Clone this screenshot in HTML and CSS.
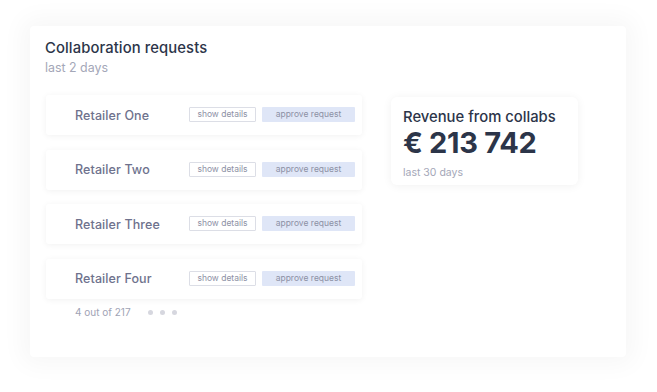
FILE: index.html
```html
<!DOCTYPE html>
<html>
<head>
<meta charset="utf-8">
<link rel="stylesheet" href="styles.css">
</head>
<body>
<div class="card">
  <h1 class="title">Collaboration requests</h1>
  <div class="subtitle">last 2 days</div>
  <div class="content">
    <div class="list">
      <div class="row">
        <span class="name">Retailer One</span>
        <span class="actions"><span class="btn-outline">show details</span><span class="btn-fill">approve request</span></span>
      </div>
      <div class="row">
        <span class="name">Retailer Two</span>
        <span class="actions"><span class="btn-outline">show details</span><span class="btn-fill">approve request</span></span>
      </div>
      <div class="row">
        <span class="name">Retailer Three</span>
        <span class="actions"><span class="btn-outline">show details</span><span class="btn-fill">approve request</span></span>
      </div>
      <div class="row">
        <span class="name">Retailer Four</span>
        <span class="actions"><span class="btn-outline">show details</span><span class="btn-fill">approve request</span></span>
      </div>
      <div class="footer">
        <span class="count">4 out of 217</span>
        <span class="dots"><i></i><i></i><i></i></span>
      </div>
    </div>
    <div class="revenue">
      <div class="rev-title">Revenue from collabs</div>
      <div class="rev-value">€ 213 742</div>
      <div class="rev-sub">last 30 days</div>
    </div>
  </div>
</div>
</body>
</html>
```
FILE: styles.css
```css
html, body {
  margin: 0;
  padding: 0;
  background: #ffffff;
}
body {
  width: 657px;
  height: 392px;
  overflow: hidden;
  font-family: "Inter", "Noto Sans", sans-serif;
  padding: 26px 31px 0 30px;
  box-sizing: border-box;
}
.card {
  width: 596px;
  height: 331px;
  background: #ffffff;
  border-radius: 4px;
  box-shadow: 0 0 24px 8px rgba(0, 0, 0, 0.035);
  box-sizing: border-box;
  padding: 12px 16px 0 15px;
}
.title {
  margin: 0;
  font-size: 14.8px;
  font-weight: 500;
  color: #2c3549;
  line-height: 20px;
  letter-spacing: 0.1px;
}
.subtitle {
  margin-top: 2px;
  font-size: 12.4px;
  color: #a4a7b8;
  line-height: 16px;
}
.content {
  display: flex;
  align-items: flex-start;
  margin-top: 19px;
}
.list {
  width: 316px;
  margin-left: 1px;
  display: flex;
  flex-direction: column;
  gap: 14.6px;
}
.row {
  height: 40px;
  background: #fff;
  border-radius: 3px;
  box-shadow: 0 1px 6px rgba(0, 0, 0, 0.06);
  display: flex;
  align-items: center;
  justify-content: space-between;
  padding: 0 7px 0 29px;
}
.name {
  font-size: 12.5px;
  color: #6e728d;
  font-weight: 500;
  letter-spacing: 0.1px;
}
.actions {
  display: flex;
  gap: 6px;
  margin-top: -1px;
}
.btn-outline, .btn-fill {
  height: 15px;
  font-size: 8.5px;
  line-height: 15px;
  color: #8d91a5;
  text-align: center;
  border-radius: 1px;
  box-sizing: border-box;
}
.btn-outline {
  width: 67px;
  border: 1px solid #dcdee6;
  line-height: 13px;
}
.btn-fill {
  width: 93px;
  background: #dfe6f7;
}
.footer {
  display: flex;
  align-items: center;
  margin-top: -7px;
  padding-left: 29px;
}
.count {
  font-size: 10px;
  color: #a0a3b5;
}
.dots {
  display: flex;
  gap: 7px;
  margin-left: 17px;
}
.dots i {
  width: 5px;
  height: 5px;
  border-radius: 50%;
  background: #d6d7df;
}
.revenue {
  margin-left: 29px;
  margin-top: 2px;
  width: 187px;
  height: 88px;
  background: #fff;
  border-radius: 6px;
  box-shadow: 0 1px 10px rgba(0, 0, 0, 0.06);
  box-sizing: border-box;
  padding: 11px 12px;
}
.rev-title {
  font-size: 14.8px;
  font-weight: 500;
  color: #2c3549;
  line-height: 18px;
}
.rev-value {
  font-size: 29px;
  font-weight: 700;
  color: #2c3549;
  line-height: 34px;
  letter-spacing: -0.3px;
}
.rev-sub {
  font-size: 10.5px;
  color: #a4a7b8;
  line-height: 14px;
  margin-top: 6px;
}
```
